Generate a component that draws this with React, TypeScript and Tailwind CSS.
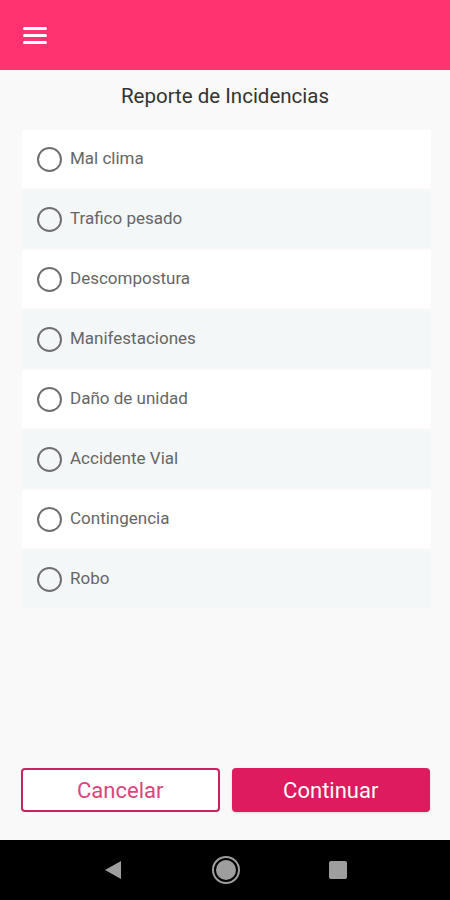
const opciones = [
  'Mal clima',
  'Trafico pesado',
  'Descompostura',
  'Manifestaciones',
  'Daño de unidad',
  'Accidente Vial',
  'Contingencia',
  'Robo',
]

export default function App() {
  return (
    <div className="flex h-[900px] w-[450px] flex-col bg-[#f9f9f9] font-['Roboto',sans-serif]">
      {/* Toolbar */}
      <div className="flex h-[70px] shrink-0 items-center bg-[#fe3370] px-[23px]">
        <div className="flex w-[24px] flex-col gap-[4px]">
          <span className="h-[3px] w-full rounded-sm bg-white" />
          <span className="h-[3px] w-full rounded-sm bg-white" />
          <span className="h-[3px] w-full rounded-sm bg-white" />
        </div>
      </div>

      {/* Content */}
      <div className="flex flex-1 flex-col">
        <h1 className="pt-[12px] text-center text-[20.5px] leading-[28px] text-[#333]">Reporte de Incidencias</h1>

        <div className="mt-[20px] flex flex-col gap-[2px] pl-[22px] pr-[19px]">
          {opciones.map((o, i) => (
            <label
              key={o}
              className={`flex h-[58px] items-center gap-[8px] px-[15px] ${i % 2 === 0 ? 'bg-white' : 'bg-[#f4f7f8]'}`}
            >
              <span className="h-[25px] w-[25px] rounded-full border-2 border-[#707070]" />
              <span className="text-[17px] text-[#666]">{o}</span>
            </label>
          ))}
        </div>

        <div className="mt-auto grid grid-cols-2 gap-[12px] pl-[21px] pr-[20px] pb-[28px]">
          <button className="h-[44px] rounded-[4px] border-2 border-[#c4245f] bg-white text-[22px] text-[#d9467c]">
            Cancelar
          </button>
          <button className="h-[44px] rounded-[4px] bg-[#dd1b5e] text-[22px] text-white shadow-sm">
            Continuar
          </button>
        </div>
      </div>

      {/* Android nav bar */}
      <div className="flex h-[60px] shrink-0 items-center justify-center gap-[88px] bg-black">
        <svg width="20" height="20" viewBox="0 0 20 20">
          <polygon points="18,1 18,19 2,10" fill="#9e9e9e" />
        </svg>
        <svg width="30" height="30" viewBox="0 0 30 30">
          <circle cx="15" cy="15" r="13" fill="none" stroke="#9e9e9e" strokeWidth="2" />
          <circle cx="15" cy="15" r="10" fill="#9e9e9e" />
        </svg>
        <div className="h-[18px] w-[18px] rounded-[2px] bg-[#9e9e9e]" />
      </div>
    </div>
  )
}
